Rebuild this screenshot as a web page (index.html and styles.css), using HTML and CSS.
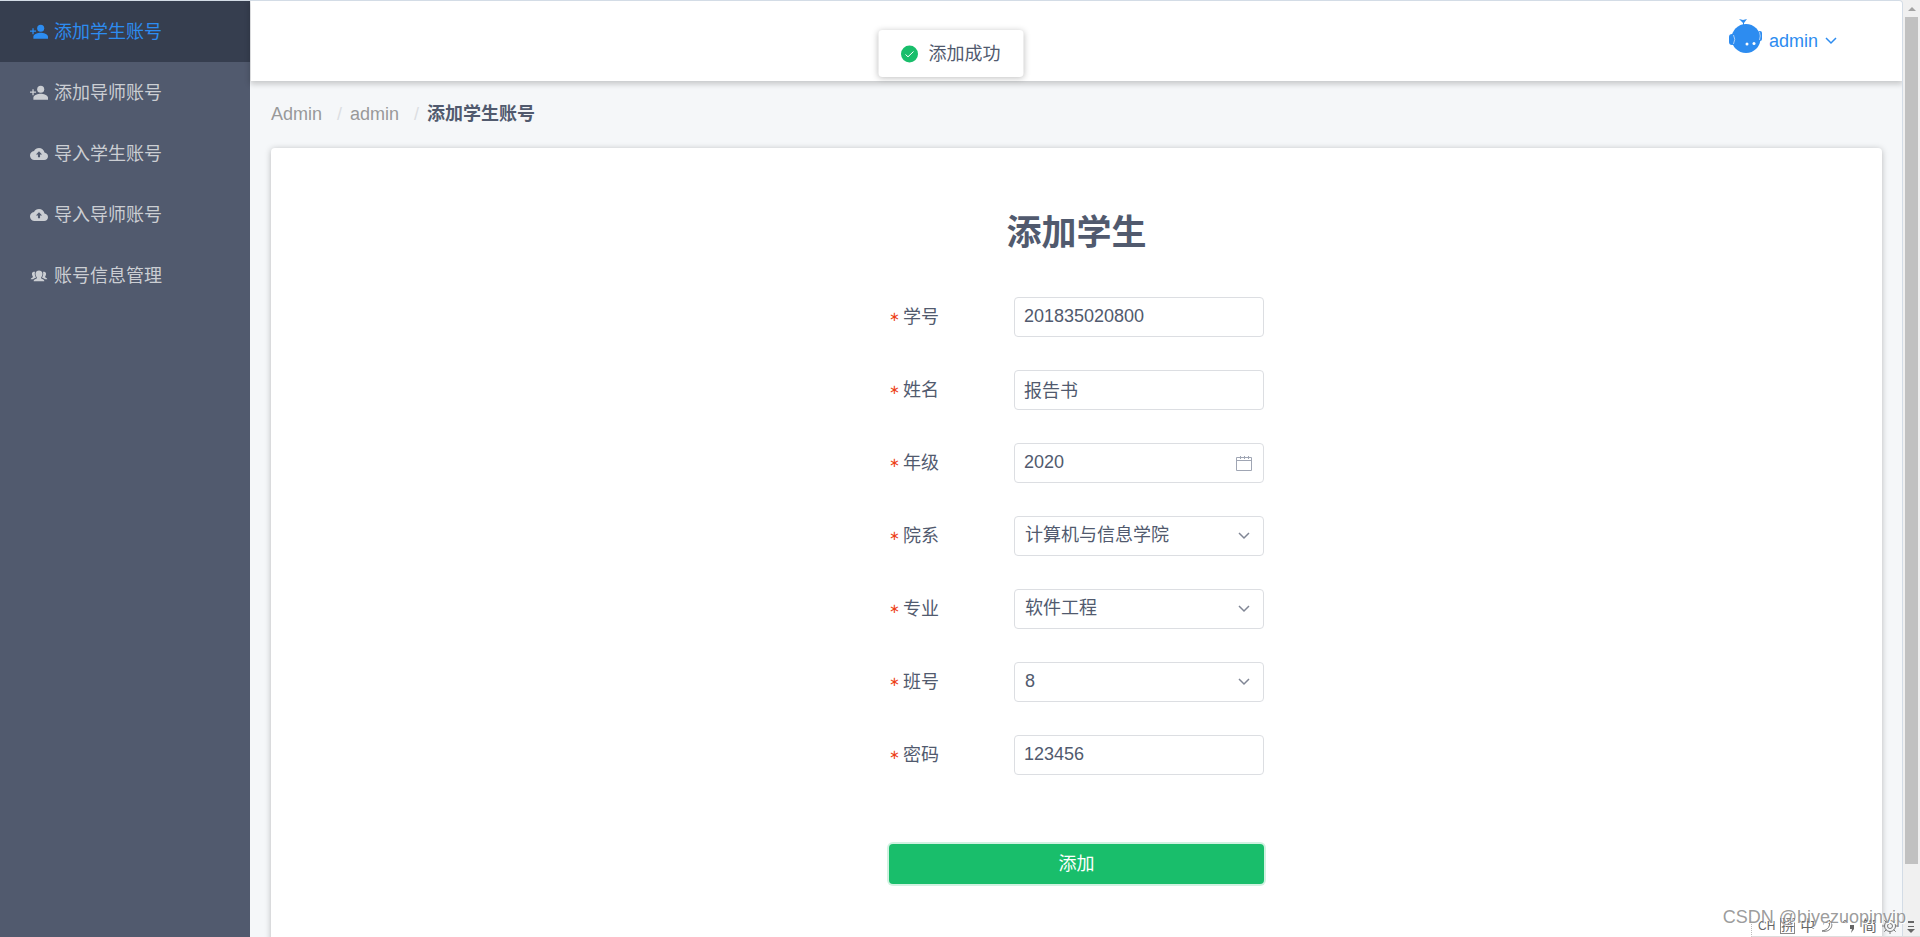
FILE: index.html
```html
<!DOCTYPE html>
<html lang="zh-CN">
<head>
<meta charset="utf-8">
<title>添加学生账号</title>
<link rel="stylesheet" href="styles.css">
</head>
<body>
<div class="app">
  <nav class="sidebar">
    <a class="nav-item active" href="#"><svg class="nav-icon" viewBox="0 0 512 512"><circle cx="304" cy="150" r="100"/><path d="M304 278c-72 0-208 36-208 108v62h416v-62c0-72-136-108-208-108zM104 216v-68H68v68H0v36h68v68h36v-68h68v-36z"/></svg>添加学生账号</a>
    <a class="nav-item" href="#"><svg class="nav-icon" viewBox="0 0 512 512"><circle cx="304" cy="150" r="100"/><path d="M304 278c-72 0-208 36-208 108v62h416v-62c0-72-136-108-208-108zM104 216v-68H68v68H0v36h68v68h36v-68h68v-36z"/></svg>添加导师账号</a>
    <a class="nav-item" href="#"><svg class="nav-icon" viewBox="0 0 512 512"><path fill-rule="evenodd" d="M413 214C398 141 334 86 256 86c-62 0-115 35-142 86C50 179 0 233 0 300c0 70 58 128 128 128h277c59 0 107-48 107-107 0-56-44-102-99-107zM256 180l88 92h-58v78h-60v-78h-58z"/></svg>导入学生账号</a>
    <a class="nav-item" href="#"><svg class="nav-icon" viewBox="0 0 512 512"><path fill-rule="evenodd" d="M413 214C398 141 334 86 256 86c-62 0-115 35-142 86C50 179 0 233 0 300c0 70 58 128 128 128h277c59 0 107-48 107-107 0-56-44-102-99-107zM256 180l88 92h-58v78h-60v-78h-58z"/></svg>导入导师账号</a>
    <a class="nav-item" href="#"><svg class="nav-icon" viewBox="0 0 512 512"><path d="M196 300c-28-32-42-74-38-120 5-55 45-84 98-84s93 29 98 84c4 46-10 88-38 120v22c14 22 92 24 92 82H104c0-58 78-60 92-82zM20 350c0-42 52-46 62-60v-16c-20-24-30-54-27-86 4-36 32-54 70-54 8 0 12 1 18 3-16 50-6 112 24 154v16c-20 12-60 16-76 43zM492 350c0-42-52-46-62-60v-16c20-24 30-54 27-86-4-36-32-54-70-54-8 0-12 1-18 3 16 50 6 112-24 154v16c20 12 60 16 76 43z"/></svg>账号信息管理</a>
  </nav>
  <div class="page">
    <header class="topbar">
      <button class="user" type="button">
        <svg class="avatar" viewBox="0 0 34 36"><path d="M10 1l4 1 4-1-3 4v3h-1V5z"/><circle cx="17" cy="20.500" r="14.500"/><rect x="0" y="16" width="6" height="11" rx="3"/><rect x="29" y="13" width="4" height="10" rx="2"/><path class="ear" d="M4.500 17q2.500 4 0 9M30.500 14q1.500 4 0 8"/><g class="eyes"><circle cx="18" cy="26" r="1.500"/><circle cx="25" cy="25.500" r="1.500"/></g></svg>
        <span>admin</span>
        <svg class="chevron" viewBox="0 0 12 8"><path d="M1 1l5 5 5-5"/></svg>
      </button>
    </header>
    <main class="content">
      <nav class="crumbs"><a href="#">Admin</a><span class="sep">/</span><a href="#">admin</a><span class="sep">/</span><strong>添加学生账号</strong></nav>
      <section class="card">
        <form class="form">
          <h1>添加学生</h1>
          <div class="row"><label for="sid">学号</label><div class="field"><input id="sid" type="text" value="201835020800"></div></div>
          <div class="row"><label for="name">姓名</label><div class="field"><input id="name" type="text" value="报告书"></div></div>
          <div class="row"><label for="grade">年级</label><div class="field"><input id="grade" type="text" value="2020"><svg class="calendar" viewBox="0 0 16 16"><path d="M.5 2.500h15v13H.5zM.5 5.500h15M4.500 1v3M8.500 1v3M12.500 1v3"/></svg></div></div>
          <div class="row"><label for="dept">院系</label><div class="field"><select id="dept"><option>计算机与信息学院</option></select><svg class="chevron" viewBox="0 0 12 8"><path d="M1 1l5 5 5-5"/></svg></div></div>
          <div class="row"><label for="major">专业</label><div class="field"><select id="major"><option>软件工程</option></select><svg class="chevron" viewBox="0 0 12 8"><path d="M1 1l5 5 5-5"/></svg></div></div>
          <div class="row"><label for="class">班号</label><div class="field"><select id="class"><option>8</option></select><svg class="chevron" viewBox="0 0 12 8"><path d="M1 1l5 5 5-5"/></svg></div></div>
          <div class="row"><label for="pwd">密码</label><div class="field"><input id="pwd" type="text" value="123456"></div></div>
          <button class="submit" type="button">添加</button>
        </form>
      </section>
    </main>
  </div>
  <div class="toast" role="status"><svg viewBox="0 0 18 18"><circle cx="9" cy="9" r="8.500"/><path d="M5 9.500l2.500 2.300L13 6.500"/></svg>添加成功</div>
</div>
<div class="scrollbar"><svg class="arrow" viewBox="0 0 8 4"><path d="M0 4l4-4 4 4z"/></svg><div class="thumb"></div></div>
<div class="ime">
  <span class="ch">CH</span><span class="boxed">拼</span><span>中</span>
  <svg viewBox="0 0 16 16"><path d="M9 2c6 4 2 13-7 11 6-1 9-5 7-11zM3 6q4-3 7 0"/></svg>
  <svg viewBox="0 0 16 16"><circle cx="4" cy="4" r="1.500"/><path class="solid" d="M9 7h4v4l-3 4 1-4H9z"/></svg>
  <span>简</span>
  <svg viewBox="0 0 16 16"><circle cx="8" cy="8" r="5.500"/><circle cx="8" cy="8" r="2.500"/><path d="M8 0v2.500M8 13.500V16M0 8h2.500M13.500 8H16M2.300 2.300l2 2M11.700 11.700l2 2M2.300 13.700l2-2M11.700 4.300l2-2"/></svg>
  <svg viewBox="0 0 16 16"><path class="solid" d="M5 3h6v2H5zM5 8h6v1H5zM4 11h8l-4 4z"/></svg>
</div>
<div class="watermark">CSDN @biyezuopinvip</div>
</body>
</html>
```
FILE: styles.css
```css
* { box-sizing: border-box; }
body {
  margin: 0;
  height: 100vh;
  display: flex;
  overflow: hidden;
  background: #f0f0f0;
  color: #515a6e;
  font: 400 18px/24px "Liberation Sans", "Noto Sans CJK SC", sans-serif;
}
a { color: inherit; text-decoration: none; }
button, input, select { font: inherit; color: inherit; }
.app {
  flex: 1;
  display: flex;
  position: relative;
  border-top: 1px solid #d3dce6;
  border-right: 1px solid #d3dce6;
  border-top-right-radius: 4px;
  background: #f5f7f9;
  overflow: hidden;
}
.sidebar { width: 250px; flex: none; background: #515a6e; }
.nav-item {
  display: flex;
  align-items: center;
  gap: 6px;
  height: 61px;
  padding-left: 30px;
  color: #cbced3;
}
.nav-item.active { background: #363e4f; color: #2d8cf0; }
.nav-icon { width: 18px; height: 18px; fill: currentColor; }
.page { flex: 1; display: flex; flex-direction: column; }
.topbar {
  height: 80px;
  flex: none;
  display: flex;
  justify-content: flex-end;
  align-items: flex-start;
  padding: 17px 65px 0 0;
  margin-left: 1px;
  background: #fff;
  box-shadow: 0 2px 6px 1px rgba(0, 0, 0, .2);
}
.user {
  display: flex;
  align-items: center;
  padding: 0;
  border: 0;
  background: none;
  color: #2d8cf0;
}
.user span { margin: 9px 7px 0 6px; }
.avatar { width: 34px; height: 36px; fill: #2d8cf0; }
.eyes { fill: #fff; }
.ear { fill: none; stroke: #a9cff8; stroke-width: 1; }
.chevron { width: 12px; height: 8px; fill: none; stroke: currentColor; stroke-width: 1.5; }
.user .chevron { margin-top: 9px; }
.content { flex: 1; padding: 21px 20px 0 21px; }
.crumbs { display: flex; height: 24px; color: #999; }
.sep { width: 28px; padding-left: 15px; color: #dcdee2; }
.crumbs strong { color: #515a6e; font-weight: 700; }
.card {
  margin-top: 22px;
  padding-top: 59px;
  padding-bottom: 80px;
  border-radius: 4px;
  background: #fff;
  box-shadow: 0 1px 6px rgba(0, 0, 0, .25);
}
.form { width: 375px; margin: 0 auto; }
h1 { margin: 0 0 38px; text-align: center; font-size: 35px; line-height: 52px; }
.row { display: flex; align-items: center; height: 40px; margin-bottom: 33px; }
label { display: flex; align-items: center; gap: 5px; width: 125px; padding-bottom: 1px; }
label::before { content: "∗"; width: 9px; color: #ed4014; font: 13px/24px "DejaVu Sans", sans-serif; }
.field { flex: 1; display: grid; align-items: center; }
.field > * { grid-area: 1 / 1; }
.field svg { justify-self: end; color: #808695; pointer-events: none; }
.field .chevron { margin-right: 14px; }
.field .calendar { width: 16px; height: 16px; margin-right: 12px; fill: none; stroke: #a0a6b4; }
input, select {
  width: 100%;
  height: 40px;
  padding: 0 9px 2px;
  border: 1px solid #dcdee2;
  border-radius: 4px;
  background: #fff;
  appearance: none;
  outline: 0;
}
select { padding-left: 10px; }
.submit {
  display: block;
  width: 100%;
  height: 40px;
  margin-top: 69px;
  border: 0;
  border-radius: 4px;
  background: #19be6b;
  color: #fff;
  box-shadow: 0 0 0 2px rgba(25, 190, 107, .2);
}
.toast {
  position: absolute;
  top: 29px;
  left: 50%;
  transform: translateX(-50%);
  display: flex;
  align-items: center;
  gap: 10px;
  height: 47px;
  padding: 0 23px 0 22px;
  border-radius: 4px;
  background: #fff;
  box-shadow: 0 1px 6px rgba(0, 0, 0, .25);
  white-space: nowrap;
}
.toast svg { width: 18px; height: 18px; fill: #19be6b; }
.toast path { fill: none; stroke: #fff; stroke-width: 1; }
.scrollbar { width: 17px; padding: 7px 2px 0; display: flex; flex-direction: column; align-items: center; }
.arrow { width: 8px; height: 4px; flex: none; fill: #a3a3a3; }
.thumb { width: 13px; height: calc(100vh - 90px); margin-top: 6px; background: #c1c1c1; }
.ime {
  position: absolute;
  right: 0;
  bottom: 0;
  display: flex;
  align-items: center;
  justify-content: space-between;
  width: 169px;
  height: 21px;
  padding: 0 1px 0 6px;
  border-left: 1px dotted #bbb;
  border-bottom: 1px solid #ddd;
  color: #666;
  font-size: 15px;
  line-height: 20px;
}
.ime svg { width: 16px; height: 16px; fill: none; stroke: #777; }
.ime .solid { fill: #666; stroke: none; }
.ch { font-size: 12px; }
.boxed { border: 1px solid #888; font-size: 13px; line-height: 14px; }
.watermark {
  position: absolute;
  right: 14px;
  bottom: 8px;
  color: rgba(130, 130, 130, .8);
  text-shadow: 1px 1px 0 #fff;
}
```
